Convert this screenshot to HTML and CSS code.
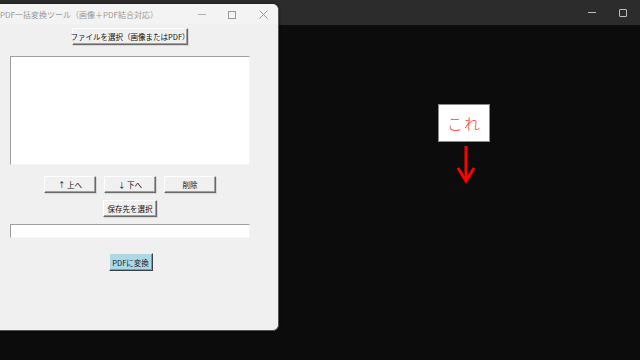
FILE: index.html
```html
<!DOCTYPE html>
<html lang="ja">
<head>
<meta charset="utf-8">
<link rel="stylesheet" href="styles.css">
</head>
<body>
<div class="desktop">
  <div class="topbar">
    <span class="tb-min"></span>
    <span class="tb-max"></span>
  </div>
  <div class="window">
    <div class="titlebar">
      <span class="title">PDF一括変換ツール（画像＋PDF結合対応）</span>
      <div class="controls">
        <span class="ctl-min"></span>
        <span class="ctl-max"></span>
        <svg class="ctl-close" width="9" height="9" viewBox="0 0 9 9"><path d="M0.5 0.5L8.5 8.5M8.5 0.5L0.5 8.5" stroke="#9a9a9a" stroke-width="1"/></svg>
      </div>
    </div>
    <div class="content">
      <button class="btn btn-file">ファイルを選択（画像またはPDF）</button>
      <div class="listbox"></div>
      <div class="row">
        <button class="btn btn-row">↑ 上へ</button>
        <button class="btn btn-row">↓ 下へ</button>
        <button class="btn btn-row">削除</button>
      </div>
      <button class="btn btn-save">保存先を選択</button>
      <div class="entry"></div>
      <button class="btn btn-convert">PDFに変換</button>
    </div>
  </div>
  <div class="callout">これ</div>
  <svg class="arrow" width="22" height="40" viewBox="0 0 22 40">
    <path d="M11 1V36" stroke="#ff0000" stroke-width="3"/>
    <path d="M3 23L11 36L19 23" stroke="#ff0000" stroke-width="3" fill="none" stroke-linejoin="miter"/>
  </svg>
</div>
</body>
</html>
```

FILE: styles.css
```css
* { box-sizing: border-box; }
html, body {
  margin: 0;
  padding: 0;
  width: 640px;
  height: 360px;
  overflow: hidden;
  background: #0c0c0c;
  font-family: "Noto Sans CJK JP", "Noto Sans", sans-serif;
}
.desktop {
  position: relative;
  width: 640px;
  height: 360px;
  background: #0c0c0c;
}
.topbar {
  height: 25px;
  background: #2c2c2c;
  display: flex;
  justify-content: flex-end;
  align-items: center;
  padding-right: 13px;
  gap: 23px;
}
.tb-min {
  width: 8px;
  height: 1px;
  background: #bdbdbd;
}
.tb-max {
  width: 8px;
  height: 8px;
  border: 1px solid #bdbdbd;
  border-radius: 1px;
}
.window {
  position: absolute;
  left: -18px;
  top: 4px;
  width: 297px;
  height: 327px;
  background: #f0f0f0;
  border-radius: 0 6px 6px 0;
  border-right: 1px solid #555;
  border-bottom: 1px solid #555;
  box-shadow: 0 0 3px rgba(0,0,0,0.6);
  display: flex;
  flex-direction: column;
}
.titlebar {
  height: 20px;
  display: flex;
  align-items: center;
  padding-left: 18px;
  padding-top: 1px;
  background: #f3f3f3;
  border-radius: 0 6px 0 0;
}
.title {
  font-size: 8px;
  color: #9a9a9a;
  white-space: nowrap;
  flex: 1;
}
.controls {
  display: flex;
  align-items: center;
}
.ctl-min {
  width: 8px;
  height: 1px;
  background: #b0b0b0;
  margin-right: 22px;
}
.ctl-max {
  width: 8px;
  height: 8px;
  border: 1px solid #9a9a9a;
  margin-right: 23px;
}
.ctl-close {
  margin-right: 10px;
}
.content {
  display: flex;
  flex-direction: column;
  align-items: center;
  padding-top: 4px;
}
.btn {
  font-family: "Noto Sans CJK JP", "Noto Sans", sans-serif;
  font-size: 7.5px;
  color: #111;
  background: #f0f0f0;
  border: 1px solid;
  border-color: #ffffff #6a6a6a #6a6a6a #ffffff;
  box-shadow: inset -1px -1px 0 #a0a0a0, 1px 1px 0 #d8d8d8;
  padding: 0;
  margin: 0;
  height: 17px;
  line-height: 15px;
  display: flex;
  align-items: center;
  justify-content: center;
  white-space: nowrap;
}
.btn-file {
  width: 116px;
}
.listbox {
  width: 240px;
  height: 109px;
  margin-top: 11px;
  background: #ffffff;
  border-top: 1px solid #a0a0a0;
  border-left: 1px solid #a0a0a0;
  border-right: 1px solid #f4f4f4;
  border-bottom: 1px solid #f4f4f4;
}
.row {
  display: flex;
  gap: 8px;
  margin-top: 11px;
}
.btn-row {
  width: 52px;
}
.btn-save {
  width: 54px;
  margin-top: 7px;
}
.entry {
  width: 240px;
  height: 14px;
  margin-top: 7px;
  background: #ffffff;
  border-top: 1px solid #a0a0a0;
  border-left: 1px solid #a0a0a0;
  border-right: 1px solid #f4f4f4;
  border-bottom: 1px solid #f4f4f4;
}
.btn-convert {
  width: 44px;
  height: 18px;
  margin-top: 15px;
  margin-left: 1px;
  background: #add8e6;
  color: #222;
  border-color: #e6f4f8 #404040 #404040 #e6f4f8;
  box-shadow: inset -1px -1px 0 #7f9aa3;
}
.callout {
  position: absolute;
  left: 438px;
  top: 104px;
  width: 52px;
  height: 38px;
  background: #ffffff;
  border: 1px solid #8a8a8a;
  color: #ff3b3b;
  font-size: 16px;
  font-weight: 300;
  display: flex;
  align-items: center;
  justify-content: center;
  letter-spacing: 1px;
}
.arrow {
  position: absolute;
  left: 455px;
  top: 145px;
}
```
